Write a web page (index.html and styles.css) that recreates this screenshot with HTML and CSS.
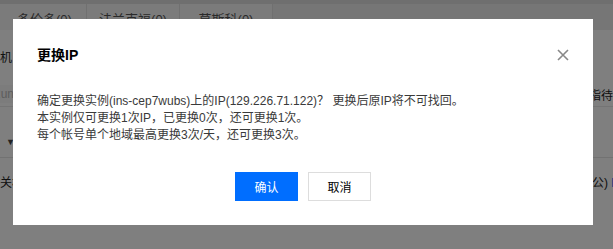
FILE: index.html
```html
<!DOCTYPE html>
<html lang="zh-CN">
<head>
<meta charset="utf-8">
<title>更换IP</title>
<link rel="stylesheet" href="styles.css">
</head>
<body>
<div class="page">
  <div class="tabs">
    <div class="tab first">多伦多(0)</div>
    <div class="tab">法兰克福(0)</div>
    <div class="tab">莫斯科(0)</div>
  </div>
  <div class="row row-a"><span class="cut-left">主机</span></div>
  <div class="row row-b"><span class="input">Run</span><span class="cut-right">指待回收</span></div>
  <div class="row row-c"><span class="caret">▼</span></div>
  <div class="row row-d"><span class="cut-left">已关机</span><span class="cut-right-small">公) <a class="link">L</a></span></div>
</div>

<div class="overlay"></div>

<div class="dialog" role="dialog">
  <div class="dialog-head">
    <h3 class="dialog-title">更换IP</h3>
    <button class="close" aria-label="关闭">
      <svg width="12" height="12" viewBox="0 0 12 12"><path d="M1 1L11 11M11 1L1 11" stroke="#888" stroke-width="1.6" fill="none"/></svg>
    </button>
  </div>
  <div class="dialog-body">
    <p>确定更换实例(ins-cep7wubs)上的IP(129.226.71.122)？ 更换后原IP将不可找回。</p>
    <p>本实例仅可更换1次IP，已更换0次，还可更换1次。</p>
    <p>每个帐号单个地域最高更换3次/天，还可更换3次。</p>
  </div>
  <div class="dialog-foot">
    <button class="btn primary">确认</button>
    <button class="btn">取消</button>
  </div>
</div>
</body>
</html>
```
FILE: styles.css
```css
html, body {
  margin: 0;
  padding: 0;
  width: 613px;
  height: 249px;
  overflow: hidden;
  background: #fff;
  font-family: "Liberation Sans", "Noto Sans CJK SC", sans-serif;
  font-size: 12px;
  color: #333;
}
.page {
  display: flex;
  flex-direction: column;
}
.tabs {
  display: flex;
  height: 30px;
  background: #ececec;
  border-top: 4px solid #dedede;
  box-sizing: border-box;
}
.tab {
  width: 92px;
  display: flex;
  align-items: center;
  justify-content: center;
  background: #f6f6f6;
  border-right: 1px solid #e0e0e0;
  font-size: 13px;
  color: #555;
  padding-top: 2px;
}
.tab.first { width: 87px; justify-content: flex-start; padding-left: 17px; box-sizing: border-box; }
.row {
  display: flex;
  justify-content: space-between;
  align-items: center;
  white-space: nowrap;
}
.row-a { height: 20px; margin-top: 16px; }
.row-b { height: 24px; margin-top: 16px; border-bottom: 1px solid #e8e8e8; }
.row-c { height: 30px; margin-top: 20px; border-bottom: 1px solid #e5e5e5; }
.row-d { height: 20px; margin-top: 13px; }
.cut-left { margin-left: -12px; color: #222; }
.cut-right { margin-right: -24px; color: #222; }
.cut-right-small { margin-right: -5px; color: #222; }
.input { background: #f8f8f8; color: #bbb; padding: 2px 6px; margin-left: -14px; }
.caret { margin-left: 6px; font-size: 9px; color: #444; }
.link { color: #006eff; }

.overlay {
  position: fixed;
  inset: 0;
  background: rgba(0, 0, 0, 0.5);
}
.dialog {
  position: fixed;
  left: 13px;
  top: 19px;
  width: 580px;
  height: 206px;
  box-sizing: border-box;
  background: #fff;
  padding: 26px 24px 24px;
  display: flex;
  flex-direction: column;
}
.dialog-head {
  display: flex;
  justify-content: space-between;
  align-items: center;
  height: 20px;
}
.dialog-title {
  margin: 0;
  font-size: 14px;
  font-weight: bold;
  color: #000;
  line-height: 20px;
}
.close {
  border: 0;
  background: none;
  padding: 0;
  width: 12px;
  height: 12px;
  display: flex;
}
.dialog-body {
  margin-top: 28px;
  color: #3a3a3a;
  font-size: 12px;
  line-height: 17px;
}
.dialog-body p { margin: 0; }
.dialog-foot {
  margin-top: auto;
  display: flex;
  justify-content: center;
  gap: 10px;
}
.btn {
  width: 63px;
  height: 29px;
  border: 1px solid #ddd;
  background: #fff;
  font-family: inherit;
  font-size: 12px;
  color: #000;
  padding: 0;
}
.btn.primary {
  background: #006eff;
  border-color: #006eff;
  color: #fff;
}
```
